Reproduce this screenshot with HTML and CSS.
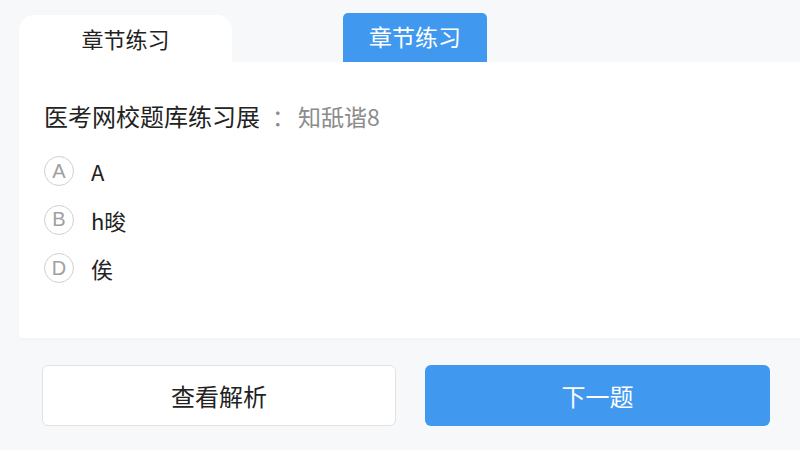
FILE: index.html
```html
<!DOCTYPE html>
<html lang="zh-CN">
<head>
<meta charset="utf-8">
<title>章节练习</title>
<link rel="stylesheet" href="styles.css">
</head>
<body>
  <div class="tabs">
    <div class="tab tab-active">章节练习</div>
    <div class="tab tab-blue">章节练习</div>
  </div>
  <div class="card">
    <div class="question">医考网校题库练习展<span class="hint"><span class="colon">：</span>知舐谐8</span></div>
    <ul class="options">
      <li class="option"><span class="letter">A</span><span class="text">A</span></li>
      <li class="option"><span class="letter">B</span><span class="text">h晙</span></li>
      <li class="option"><span class="letter">D</span><span class="text">俟</span></li>
    </ul>
  </div>
  <div class="actions">
    <button class="btn btn-ghost">查看解析</button>
    <button class="btn btn-primary">下一题</button>
  </div>
</body>
</html>
```
FILE: styles.css
```css
* { box-sizing: border-box; }

html, body {
  margin: 0;
  padding: 0;
  width: 800px;
  height: 450px;
  overflow: hidden;
  background: #f7f8f9;
  font-family: "Noto Sans CJK SC", "Noto Sans", sans-serif;
  color: #222;
}

.tabs {
  display: flex;
  align-items: flex-end;
  padding: 13px 0 0 19px;
  height: 62px;
}

.tab {
  display: flex;
  align-items: center;
  justify-content: center;
}

.tab-active {
  width: 213px;
  height: 47px;
  background: #fff;
  border-radius: 15px 15px 0 0;
  padding-bottom: 2px;
  font-size: 22px;
  color: #222;
}

.tab-blue {
  margin-left: 111px;
  width: 144px;
  height: 49px;
  background: #4099ee;
  color: #fff;
  border-radius: 5px 5px 0 0;
  padding-bottom: 3px;
  font-size: 23px;
}

.card {
  margin-left: 19px;
  height: 276px;
  background: #fff;
  padding: 39px 0 0 25px;
  box-shadow: 0 2px 4px rgba(0, 0, 0, 0.025);
}

.question {
  font-size: 24px;
  line-height: 30px;
  color: #222;
}

.hint {
  color: #8c8c8c;
  font-size: 23px;
}

.colon {
  margin: 0 3px 0 12px;
}

.options {
  list-style: none;
  margin: 16px 0 0;
  padding: 0;
}

.option {
  display: flex;
  align-items: center;
  height: 48.5px;
}

.letter {
  width: 30px;
  height: 30px;
  border: 1.5px solid #d0d0d0;
  border-radius: 50%;
  display: flex;
  align-items: center;
  justify-content: center;
  font-family: "Liberation Sans", "Noto Sans", sans-serif;
  font-size: 20px;
  color: #a0a0a0;
}

.text {
  margin-left: 17px;
  font-size: 22px;
  line-height: 1;
  color: #222;
}

.actions {
  display: flex;
  padding: 27px 0 0 42px;
  gap: 29px;
}

.btn {
  height: 61px;
  font-family: "Noto Sans CJK SC", "Noto Sans", sans-serif;
  font-size: 24px;
  border-radius: 6px;
  cursor: pointer;
}

.btn-ghost {
  width: 354px;
  background: #fff;
  border: 1px solid #e2e2e2;
  color: #222;
}

.btn-primary {
  width: 345px;
  background: #4099ee;
  border: none;
  color: #fff;
}
```
